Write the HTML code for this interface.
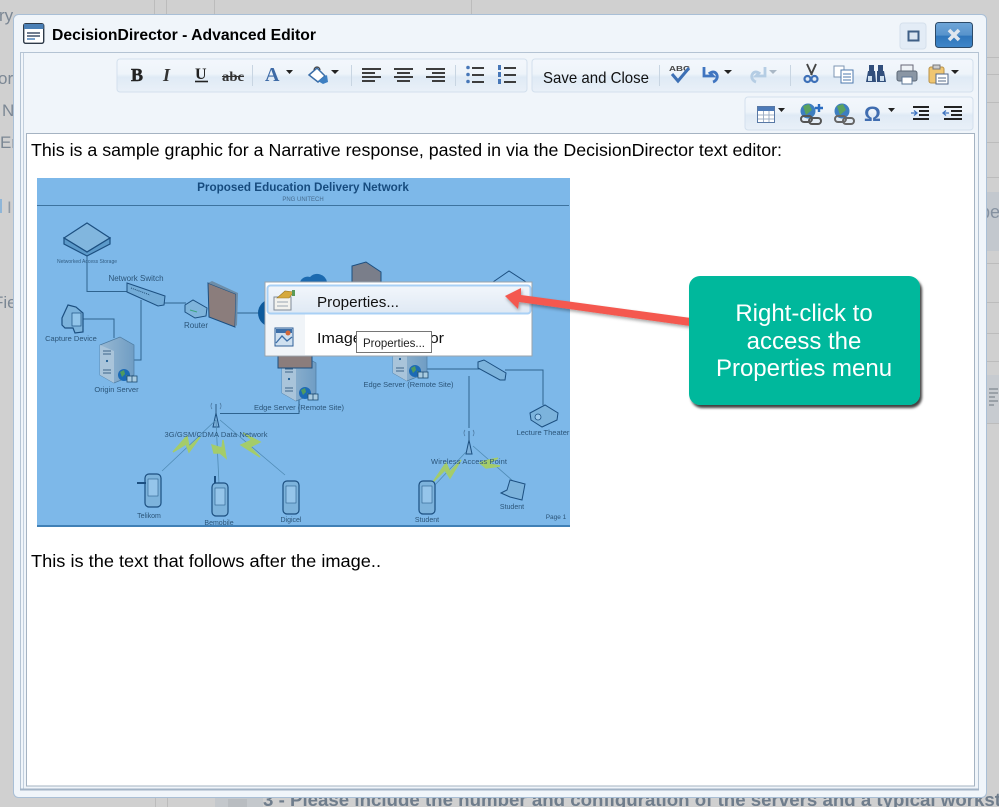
<!DOCTYPE html>
<html><head><meta charset="utf-8"><title>DecisionDirector - Advanced Editor</title>
<style>html,body{margin:0;padding:0;width:999px;height:807px;overflow:hidden;background:#d0d0d0}svg{display:block}text{font-family:"Liberation Sans",sans-serif}</style></head>
<body>
<svg xmlns="http://www.w3.org/2000/svg" width="999" height="807" viewBox="0 0 999 807">
<defs>
<linearGradient id="tb" x1="0" y1="0" x2="0" y2="1"><stop offset="0" stop-color="#f3f7fc"/><stop offset=".45" stop-color="#eef4fa"/><stop offset=".55" stop-color="#dfeaf5"/><stop offset="1" stop-color="#e9f0f8"/></linearGradient>
<linearGradient id="x" x1="0" y1="0" x2="0" y2="1"><stop offset="0" stop-color="#6fa6d8"/><stop offset=".5" stop-color="#5793cc"/><stop offset=".55" stop-color="#2f76bb"/><stop offset="1" stop-color="#3f86c8"/></linearGradient>
<linearGradient id="hl" x1="0" y1="0" x2="0" y2="1"><stop offset="0" stop-color="#f2f6fb"/><stop offset="1" stop-color="#dfe9f4"/></linearGradient>
<linearGradient id="srv" x1="0" y1="0" x2="1" y2="0"><stop offset="0" stop-color="#98b8d2"/><stop offset="1" stop-color="#6f9dc4"/></linearGradient>
<filter id="sh" x="-10%" y="-10%" width="125%" height="125%"><feDropShadow dx="2" dy="3" stdDeviation="1.2" flood-color="#000" flood-opacity=".75"/></filter>
<filter id="as" x="-10%" y="-50%" width="120%" height="200%"><feDropShadow dx="1" dy="2" stdDeviation="1.5" flood-color="#000" flood-opacity=".35"/></filter>
<filter id="b"><feGaussianBlur stdDeviation=".35"/></filter>
<g id="srvr"><path d="M0 8 20 0 34 8V38L14 46 0 38Z" fill="url(#srv)" stroke="#4d7ba1" stroke-width=".7"/><path d="M0 8 14 14V46L0 38Z" fill="#a9c4da"/><path d="M3 14h8M3 17h8M3 33h8M3 36h8" stroke="#3d6488" stroke-width=".9"/><circle cx="7" cy="24" r="1.100" fill="#1d5c92"/></g>
<g id="gl"><circle r="6" fill="#1f6bb5"/><path d="M-4-3 0-5 1-1-2 2ZM2 0 5 1 3 4Z" fill="#4f9a5f"/><rect x="3" y="1" width="10" height="6" fill="#a8cbe0" stroke="#1c4a70" stroke-width=".8"/><path d="M8 1v6" stroke="#1c4a70" stroke-width=".8"/></g>
<g id="ant"><path d="M-3 14 0 0 3 14Z" fill="#7fb2dc" stroke="#1c4f80"/><path d="M0-9V2" stroke="#2b5a85"/><path d="M-4-10a5 5 0 0 0 0 6M4-10a5 5 0 0 1 0 6" fill="none" stroke="#456f95" stroke-width=".7"/></g>
<g id="ph"><rect x="0" y="0" width="16" height="33" rx="4" fill="#7db3dc" stroke="#1c4f80" stroke-width="1.200"/><rect x="3" y="5" width="10" height="17" fill="#95c5ea" stroke="#2a5f8e" stroke-width=".6"/></g>
</defs>

<!-- background page -->
<rect width="999" height="807" fill="#d0d0d0"/>
<g stroke="#bcbcbc"><path d="M154.500 0V14M166.500 0V14M214.500 0V14M471.500 0V14M155.500 798V807M167.500 798V807"/><path d="M987 57.500H999M987 74.500H999M987 102.500H999M987 142.500H999M987 177.500H999M987 263.500H999M987 302.500H999M987 333.500H999M987 361.500H999M987 423.500H999"/></g>
<rect x="987" y="192" width="12" height="59" fill="#c3c8ce"/>
<rect x="987" y="375" width="12" height="48" fill="#c7cbd0"/>
<rect x="215" y="798" width="48" height="9" fill="#c4c8cc"/>
<rect x="228" y="799" width="19" height="8" fill="#b9bdc1"/>
<path d="M989 389h9M989 393h9M989 397h6M989 401h9M989 405h5" stroke="#7f8890" stroke-width="1.200"/>
<g fill="#7b8794" font-size="17">
<text x="-1" y="21">ry</text><text x="-2" y="84">or</text><text x="2" y="116">N</text><text x="0" y="148">Er</text><text x="7" y="213" fill="#8f9aa5">I</text><text x="-7" y="308">Fie</text>
<text x="980" y="218" font-size="18" fill="#8591a0">pe</text></g>
<rect x="0" y="199" width="2" height="14" fill="#8fb6d8"/>
<text x="263" y="806" font-size="18" font-weight="bold" fill="#6f7d8c" textLength="738" lengthAdjust="spacingAndGlyphs">3 - Please include the number and configuration of the servers and a typical workst</text>

<!-- window -->
<rect x="13.500" y="14.500" width="973" height="783" rx="5" fill="#f0f5fa" stroke="#a9bfd6"/>
<rect x="20.500" y="52.500" width="958" height="737" fill="#f0f5fa" stroke="#b4c3d3"/>
<path d="M23.500 53V790" stroke="#c2cfdd"/>
<path d="M20 789.500H979" stroke="#a3b4c6" stroke-width="2"/>

<!-- title -->
<g transform="translate(23,23)"><rect x=".7" y=".7" width="20" height="19.600" rx="2" fill="#fff" stroke="#2e3a48" stroke-width="1.400"/><rect x="1" y="1" width="19.500" height="5" fill="#4b80b6"/><path d="M4 10h13M4 13h13" stroke="#40506a" stroke-width="1.400"/><path d="M4 16h8" stroke="#3f78b3" stroke-width="1.400"/></g>
<text x="52" y="40" font-size="15.500" font-weight="bold" fill="#000" textLength="264" lengthAdjust="spacingAndGlyphs">DecisionDirector - Advanced Editor</text>
<rect x="900" y="23" width="26" height="26" rx="3" fill="#e3ecf6" stroke="#d5e0ec"/>
<rect x="908.500" y="31.500" width="10" height="9" fill="#dbe6f2" stroke="#3f5f86" stroke-width="2"/>
<rect x="935.500" y="22.500" width="37" height="25" rx="3" fill="url(#x)" stroke="#2c4a68"/>
<path d="M949 30 959 40M959 30 949 40" stroke="#dfe6ee" stroke-width="3.600"/>

<!-- toolbars -->
<g fill="url(#tb)" stroke="#d3e0ed"><rect x="117" y="59" width="410" height="33" rx="3"/><rect x="532" y="59" width="441" height="33" rx="3"/><rect x="745" y="97" width="228" height="33" rx="3"/></g>
<path d="M252.500 65V86M351.500 65V86M455.500 65V86M659.500 65V86M790.500 65V86" stroke="#c8d5e2"/>

<g filter="url(#b)">
<!-- row 1 icons -->
<text x="131" y="81" font-size="18" font-weight="bold" fill="#222" stroke="#222" stroke-width=".5" style="font-family:'Liberation Serif',serif">B</text>
<text x="163" y="81" font-size="18" font-style="italic" font-weight="bold" fill="#333" style="font-family:'Liberation Serif',serif">I</text>
<text x="195" y="79" font-size="16" font-weight="bold" fill="#222" style="font-family:'Liberation Serif',serif">U</text><path d="M195 81.500h13" stroke="#222" stroke-width="1.600"/>
<text x="222" y="81" font-size="13.500" font-weight="bold" fill="#333" style="font-family:'Liberation Serif',serif" textLength="22" lengthAdjust="spacingAndGlyphs">abc</text><path d="M222 76.500h22" stroke="#333"/>
<text x="265" y="81" font-size="20" font-weight="bold" fill="#3d6aa6" style="font-family:'Liberation Serif',serif">A</text>
<path d="M286 70h7l-3.500 4ZM331 70h8l-4 4ZM724 70h8l-4 4ZM951 70h8l-4 4Z" fill="#222"/>
<path d="M769 70h8l-4 4Z" fill="#aab8c6"/>
<g transform="translate(309,66)"><path d="M0 9 8 2 16 10 9 16Z" fill="#fff" stroke="#3b6ea8" stroke-width="1.500"/><path d="M5 4a3 3 0 0 1 6 0" fill="none" stroke="#444" stroke-width="1.200"/><path d="M9 15 18 9 19 16 14 18Z" fill="#3d7fc2"/></g>
<g fill="#3c3c3c">
<path d="M362 68h19v2h-19zM362 72h13v2h-13zM362 76h19v2h-19zM362 80h13v2h-13z"/>
<path d="M394 68h19v2h-19zM397 72h13v2h-13zM394 76h19v2h-19zM397 80h13v2h-13z"/>
<path d="M426 68h19v2h-19zM432 72h13v2h-13zM426 76h19v2h-19zM432 80h13v2h-13z"/>
<path d="M472 67h12v2h-12zM472 74h12v2h-12zM472 81h12v2h-12z"/>
<path d="M504 67h12v2h-12zM504 74h12v2h-12zM504 81h12v2h-12z"/>
</g>
<g fill="#4677b8"><circle cx="468" cy="67.500" r="1.800"/><circle cx="468" cy="74.500" r="1.800"/><circle cx="468" cy="81.500" r="1.800"/><path d="M498 65h3v5h-3zM498 72h3v5h-3zM498 79h3v5h-3z"/></g>
<text x="669" y="71" font-size="7.500" font-weight="bold" fill="#444" textLength="21" lengthAdjust="spacingAndGlyphs">ABC</text><path d="M672 74 678 81 689 68" fill="none" stroke="#3d6fb5" stroke-width="3"/>
<path d="M704 67v9h9l-3-3c3-2 6-1 7 2 1 3-1 6-4 7" fill="none" stroke="#3f74c0" stroke-width="2.800"/>
<path d="M765 67v9h-9l3-3c-3-2-6-1-7 2-1 3 1 6 4 7" fill="none" stroke="#b5cde4" stroke-width="2.800"/>
<g transform="translate(804,64)"><path d="M3 0 8 11M12 0 7 11" stroke="#444" stroke-width="1.900"/><circle cx="3.500" cy="15" r="3" fill="none" stroke="#3d70b8" stroke-width="2.200"/><circle cx="10.500" cy="15" r="3" fill="none" stroke="#3d70b8" stroke-width="2.200"/></g>
<g transform="translate(834,66)"><rect x="0" y="0" width="10" height="11" fill="#fff" stroke="#7e96b3"/><rect x="7" y="4" width="12" height="13" fill="#fff" stroke="#4d79ae"/><path d="M9 8h8M9 11h8M9 14h8" stroke="#4d79ae"/></g>
<g transform="translate(866,65)" fill="#30507c"><rect x="3" y="0" width="5" height="6"/><rect x="12" y="0" width="5" height="6"/><path d="M2 6h7l1 11H0ZM11 6h7l2 11h-9Z"/><rect x="2" y="11" width="4" height="5" fill="#cfe0ef"/><rect x="14" y="11" width="4" height="5" fill="#cfe0ef"/></g>
<g transform="translate(896,64)"><rect x="5" y="1" width="12" height="7" fill="#eef2f6" stroke="#667"/><rect x="1" y="7" width="20" height="10" rx="2" fill="#8a96a4" stroke="#5c6876"/><rect x="6" y="13" width="10" height="7" fill="#fff" stroke="#5d7796"/></g>
<g transform="translate(929,65)"><rect x="0" y="2" width="15" height="16" rx="2" fill="#f0c671" stroke="#b89148"/><rect x="4" y="0" width="7" height="4" fill="#ccc" stroke="#777"/><rect x="7" y="9" width="12" height="10" fill="#fff" stroke="#52688a"/><path d="M9 13h8M9 16h8" stroke="#52688a"/></g>

<!-- row 2 icons -->
<g transform="translate(757,106)"><rect x=".5" y=".5" width="17" height="16" fill="#fff" stroke="#5878a5"/><rect x="1" y="1" width="16" height="4" fill="#4d7ab8"/><path d="M6.500 5v11M12 5v11M1 9h16M1 13h16" stroke="#a0b0c6"/></g>
<path d="M778 108h7l-3.500 4ZM888 108h7l-3.500 4Z" fill="#222"/>
<circle cx="808" cy="111" r="7.500" fill="#3c7ec0"/><path d="M803 106 809 104 812 110 806 115Z" fill="#5aa25f"/><rect x="801" y="116" width="11" height="6" rx="3" fill="none" stroke="#555" stroke-width="2"/><rect x="809" y="118" width="12" height="6" rx="3" fill="none" stroke="#555" stroke-width="2"/>
<path d="M815 108h8M819 104v8" stroke="#2b6cc0" stroke-width="2.400"/>
<circle cx="842" cy="111" r="7.500" fill="#3c7ec0"/><path d="M837 106 843 104 846 110 840 115Z" fill="#5aa25f"/><rect x="835" y="116" width="11" height="6" rx="3" fill="none" stroke="#666" stroke-width="2"/><rect x="843" y="118" width="11" height="6" rx="3" fill="none" stroke="#666" stroke-width="2"/>
<text x="864" y="121" font-size="21" font-weight="bold" fill="#3f6db0">Ω</text>
<g fill="#222"><path d="M913 106h16v2h-16zM919 110h10v2h-10zM919 114h10v2h-10zM913 118h16v2h-16z"/><path d="M944 106h18v2h-18zM951 110h11v2h-11zM951 114h11v2h-11zM944 118h18v2h-18z"/></g>
<path d="M911 113h6M914 110.500 917 113 914 115.500M949 113h-6M946 110.500 943 113 946 115.500" fill="none" stroke="#3f74c0" stroke-width="1.300"/>
</g>
<text x="543" y="83" font-size="16" fill="#111" textLength="106" lengthAdjust="spacingAndGlyphs">Save and Close</text>

<!-- editor -->
<rect x="26.500" y="133.500" width="948" height="652.500" fill="#fff" stroke="#a5b3c2"/>
<text x="31" y="156" font-size="17.500" fill="#000" textLength="751" lengthAdjust="spacingAndGlyphs">This is a sample graphic for a Narrative response, pasted in via the DecisionDirector text editor:</text>
<text x="31" y="567" font-size="17.500" fill="#000" textLength="350" lengthAdjust="spacingAndGlyphs">This is the text that follows after the image..</text>

<!-- image -->
<svg x="37" y="178" width="533" height="349" viewBox="37 178 533 349">
<rect x="37" y="178" width="533" height="349" fill="#7db8e9"/>
<g filter="url(#b)">
<text x="303" y="191" font-size="11.700" font-weight="bold" fill="#184c7e" text-anchor="middle">Proposed Education Delivery Network</text>
<text x="303" y="201" font-size="6" fill="#456b8e" text-anchor="middle">PNG UNITECH</text>
<path d="M37 205.500H569" stroke="#3e739f"/>
<path d="M37 526H570" stroke="#2f6ea6" stroke-width="1.500"/>
<g fill="none" stroke="#2f648f">
<path d="M87 255V291.500H130M141 300V360H133M163 303H186M236 313H260M83 319H114V338M220 413.500H299V398M425 369H480M469 376V428M505 370H543V405"/>
</g>
<path d="M64 238 87 223 110 238 87 252Z" fill="#81b6de" stroke="#1c4f80" stroke-width="1.200"/><path d="M64 238V244L87 256 110 244V238L87 252Z" fill="#5b9aca" stroke="#1c4f80" stroke-width="1.200"/>
<text x="87" y="263" font-size="5" fill="#325d83" text-anchor="middle">Networked Access Storage</text>
<text x="136" y="281" font-size="8" fill="#2c5579" text-anchor="middle">Network Switch</text>
<path d="M127 283 165 296 164 305 158 306 127 292Z" fill="#73acd8" stroke="#1c4f80"/><path d="M131 288 150 295" stroke="#234f77" stroke-dasharray="1 1"/>
<path d="M185 305 193 300 207 308 206 316 195 318 185 312Z" fill="#7fb4db" stroke="#1c4f80"/><path d="M190 310 197 312" stroke="#3ea37f"/>
<text x="196" y="328" font-size="8" fill="#2c5579" text-anchor="middle">Router</text>
<path d="M208 283 236 294 235 327 209 317Z" fill="#8b7d7c" stroke="#1c4f80"/><path d="M208 283 212 281 238 293 236 294ZM236 294 238 293 237 325 235 327Z" fill="#6d8da8"/>
<circle cx="272" cy="313" r="14" fill="#0f5a9c"/>
<path d="M62 318 68 305 76 307 83 313V332L75 333 73 328H65L62 325Z" fill="#7cb3dc" stroke="#1c4f80" stroke-width="1.200"/><rect x="72" y="313" width="9" height="13" fill="#92c5ea" stroke="#1c4f80" stroke-width=".7"/>
<text x="71" y="341" font-size="7.500" fill="#2c5579" text-anchor="middle">Capture Device</text>
<use href="#srvr" x="100" y="337"/><use href="#gl" x="124" y="375"/>
<text x="116.500" y="392" font-size="7.500" fill="#2c5579" text-anchor="middle">Origin Server</text>
<use href="#srvr" x="282" y="355"/><use href="#gl" x="305" y="393"/>
<text x="299" y="410" font-size="7.500" fill="#2c5579" text-anchor="middle">Edge Server (Remote Site)</text>
<path d="M352 266 366 262 381 272V290H352Z" fill="#7a7e8a" stroke="#1c4f80"/>
<path d="M300 282a8 8 0 0 1 10-5 10 10 0 0 1 17 5Z" fill="#1a6bb0"/>
<path d="M493 282 509 271 526 282Z" fill="none" stroke="#1c4f80"/>
<path d="M278 356H312V368H278Z" fill="#8b7d7c" stroke="#1c4f80"/>
<use href="#srvr" x="393" y="335"/><use href="#gl" x="415" y="371"/>
<text x="408.500" y="387" font-size="7.500" fill="#2c5579" text-anchor="middle">Edge Server (Remote Site)</text>
<path d="M478 362 484 360 506 373 505 380 500 380 478 368Z" fill="#7cb3dc" stroke="#1c4f80"/>
<path d="M530 413 545 405 558 413 557 420 542 427 531 420Z" fill="#7cb3dc" stroke="#1c4f80"/><circle cx="538" cy="417" r="3" fill="#9dcbef" stroke="#1c4f80" stroke-width=".8"/>
<text x="543" y="435" font-size="7.500" fill="#2c5579" text-anchor="middle">Lecture Theater</text>
<use href="#ant" x="216" y="413"/><use href="#ant" x="469" y="440"/>
<path d="M216 420 162 471M216 420 219 484M220 420 285 475M466 452 433 487M473 446 513 481" stroke="#4f8bb5" stroke-width=".8"/>
<g fill="#a4cc6a" stroke="#a4cc6a" stroke-width="1.400">
<path d="M173 452 187 436 189 447 200 437 189 452 186 444Z"/><path d="M212 445 222 448 223 440 226 458 220 453 214 453Z"/><path d="M241 445 252 440 243 433 260 442 250 447 260 457Z"/>
<path d="M433 482 446 463 450 472 461 460 450 478 445 470Z"/><path d="M484 461 498 458 488 464 500 466 486 468 480 463Z"/>
</g>
<text x="216" y="437" font-size="7.500" fill="#2c5579" text-anchor="middle" textLength="103">3G/GSM/CDMA Data Network</text>
<text x="469" y="464" font-size="7.500" fill="#2c5579" text-anchor="middle" textLength="76">Wireless Access Point</text>
<use href="#ph" x="145" y="474"/><path d="M137 483h9" stroke="#1c4f80" stroke-width="2"/>
<use href="#ph" x="212" y="483"/><path d="M215 483V476" stroke="#1c4f80" stroke-width="2"/>
<use href="#ph" x="283" y="481"/><use href="#ph" x="419" y="481"/>
<path d="M501 493 510 497 522 500 525 484 510 480 507 490Z" fill="#7cb3dc" stroke="#1c4f80"/>
<text x="149" y="518" font-size="7" fill="#2c5579" text-anchor="middle">Telikom</text>
<text x="219" y="525" font-size="7" fill="#2c5579" text-anchor="middle">Bemobile</text>
<text x="291" y="522" font-size="7" fill="#2c5579" text-anchor="middle">Digicel</text>
<text x="427" y="522" font-size="7" fill="#2c5579" text-anchor="middle">Student</text>
<text x="512" y="509" font-size="7" fill="#2c5579" text-anchor="middle">Student</text>
<text x="556" y="519" font-size="6.500" fill="#2c5579" text-anchor="middle">Page 1</text>
</g></svg>

<!-- context menu -->
<rect x="265" y="282" width="267" height="74" fill="#fff" stroke="#9aa3ac"/>
<rect x="266" y="314" width="39" height="41" fill="#f0f4f8"/>
<rect x="267.500" y="285.500" width="263" height="28" rx="3" fill="url(#hl)" stroke="#a9d0f5" stroke-width="2"/>
<g transform="translate(274,290)"><rect x="0" y="7" width="17" height="13" fill="#f2f2ee" stroke="#7f8a98"/><path d="M3 12h11M3 16h11" stroke="#9aa6b2"/><path d="M3 8 11 1 20 2 15 8Z" fill="#d6a93b" stroke="#9a7a2a" stroke-width=".6"/><path d="M18 0h3v6h-3z" fill="#5a9a5a"/></g>
<g transform="translate(275,328)"><rect x="0" y="0" width="18" height="18" fill="#cfe0f0" stroke="#2f5f98"/><rect x="1" y="1" width="16" height="4" fill="#3d6fa8"/><path d="M1 15 7 8 12 13 17 9" fill="none" stroke="#3b6da6" stroke-width="1.300"/><circle cx="13" cy="5" r="2.500" fill="#d4693a"/></g>
<text x="317" y="307" font-size="15" fill="#111" textLength="82" lengthAdjust="spacingAndGlyphs">Properties...</text>
<text x="317" y="343" font-size="15" fill="#111" textLength="127" lengthAdjust="spacingAndGlyphs">Image Map Editor</text>
<rect x="356.500" y="331.500" width="75" height="21" fill="#fff" stroke="#767676"/>
<text x="363" y="347" font-size="12" fill="#222" textLength="62" lengthAdjust="spacingAndGlyphs">Properties...</text>

<!-- arrow -->
<path d="M691 318 521 295 521 288 505 296 518 309 519 302 690 326Z" fill="#f4594f" filter="url(#as)"/>

<!-- callout -->
<rect x="689" y="276" width="231" height="129" rx="11" fill="#00b89c" filter="url(#sh)"/>
<g fill="#fff" font-size="24" text-anchor="middle"><text x="804" y="321">Right-click to</text><text x="804" y="349">access the</text><text x="804" y="376">Properties menu</text></g>
</svg>
</body></html>
